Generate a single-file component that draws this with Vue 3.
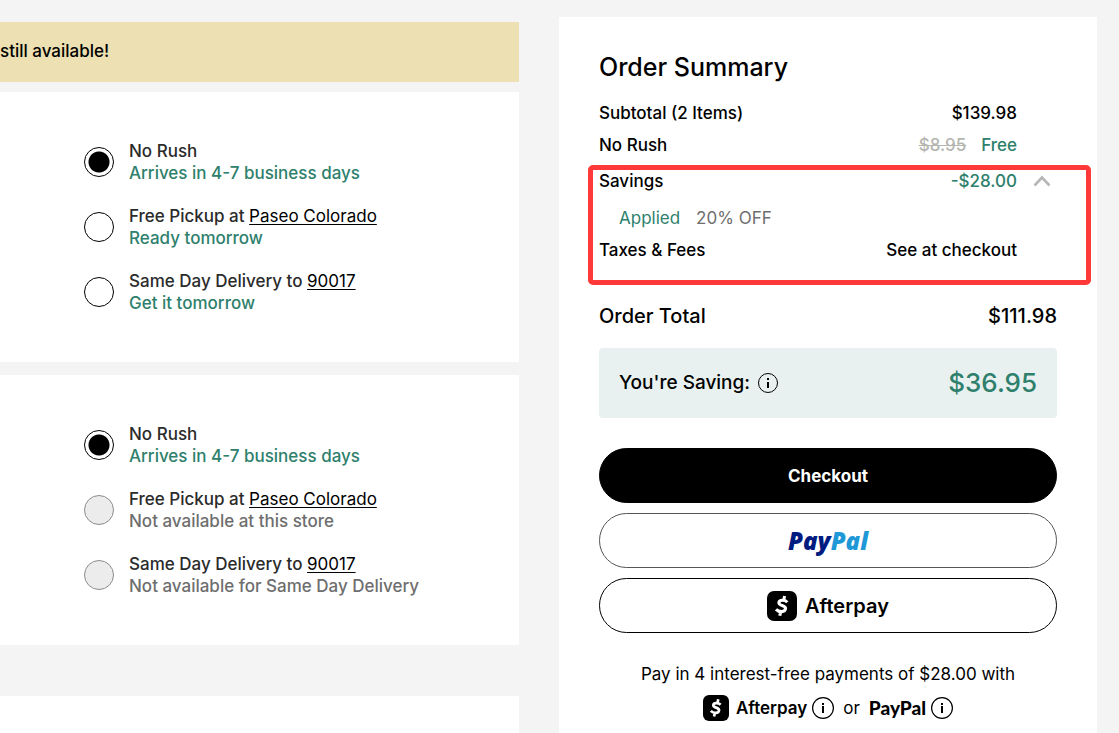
<script setup>
import { ref, reactive } from 'vue'

const items = reactive([
  {
    selected: 'rush',
    options: [
      { id: 'rush', label: 'No Rush', note: 'Arrives in 4-7 business days' },
      { id: 'pickup', label: 'Free Pickup at', link: 'Paseo Colorado', note: 'Ready tomorrow' },
      { id: 'same', label: 'Same Day Delivery to', link: '90017', note: 'Get it tomorrow' },
    ],
  },
  {
    selected: 'rush',
    options: [
      { id: 'rush', label: 'No Rush', note: 'Arrives in 4-7 business days' },
      { id: 'pickup', label: 'Free Pickup at', link: 'Paseo Colorado', note: 'Not available at this store', off: true },
      { id: 'same', label: 'Same Day Delivery to', link: '90017', note: 'Not available for Same Day Delivery', off: true },
    ],
  },
])
const open = ref(true)
</script>

<template>
  <div class="page">
    <main class="bag">
      <p class="banner">still available!</p>
      <section v-for="(item, i) in items" :key="i" class="card" role="radiogroup" aria-label="Delivery method">
        <div v-for="o in item.options" :key="o.id" class="option">
          <input :id="`${o.id}-${i}`" v-model="item.selected" type="radio" :name="`delivery-${i}`" :value="o.id" :disabled="o.off" />
          <div class="option-text">
            <div><label :for="`${o.id}-${i}`">{{ o.label }}</label><template v-if="o.link">{{ ' ' }}<a href="#">{{ o.link }}</a></template></div>
            <div class="note" :class="{ off: o.off }">{{ o.note }}</div>
          </div>
        </div>
      </section>
      <section class="card rest"></section>
    </main>

    <aside class="summary">
      <h1>Order Summary</h1>
      <div class="row"><span>Subtotal (2 Items)</span><span>$139.98</span></div>
      <div class="row"><span>No Rush</span><span><s>$8.95</s><span class="green">Free</span></span></div>
      <div class="highlight">
        <div class="row">
          <span>Savings</span><span class="green">-$28.00</span>
          <button class="toggle" type="button" aria-label="Toggle savings details" :aria-expanded="open" @click="open = !open">
            <svg width="18" height="12" viewBox="0 0 18 12"><path d="M1.5 10.500 9 2.500l7.500 8" fill="none" stroke="#b7b7b7" stroke-width="2.600" /></svg>
          </button>
        </div>
        <div v-if="open" class="applied"><span class="green">Applied</span><span>20% OFF</span></div>
        <div class="row"><span>Taxes &amp; Fees</span><span>See at checkout</span></div>
      </div>
      <div class="total"><span>Order Total</span><span>$111.98</span></div>
      <div class="saving">
        <span>You're Saving:</span>
        <button class="info" type="button" aria-label="About your savings">
          <svg width="20" height="20" viewBox="0 0 20 20"><circle cx="10" cy="10" r="9.500" fill="none" stroke="#000" /><path d="M9 5h2v2H9zM9 9h2v6H9z" /></svg>
        </button>
        <strong class="green">$36.95</strong>
      </div>
      <div class="actions">
        <button type="button" class="pill checkout">Checkout</button>
        <button type="button" class="pill paypal"><span class="pp"><span class="navy">Pay</span><span class="sky">Pal</span></span></button>
        <button type="button" class="pill">
          <svg width="30" height="30" viewBox="0 0 30 30"><rect width="30" height="30" rx="7" /><path d="M20.300 11.200C18 8.800 12.300 8.400 11.900 11.700C11.500 15.100 18.900 14 18.500 17.700C18.100 21.500 12 21.400 9 18.300M17.600 5l-1 4.500M13.800 20l-1 4.800" fill="none" stroke="#fff" stroke-width="3.100" /></svg>
          <span class="ap">Afterpay</span>
        </button>
      </div>
      <p class="pay-in">Pay in 4 interest-free payments of $28.00 with</p>
      <div class="providers">
        <svg width="26" height="26" viewBox="0 0 30 30"><rect width="30" height="30" rx="7" /><path d="M20.300 11.200C18 8.800 12.300 8.400 11.900 11.700C11.500 15.100 18.900 14 18.500 17.700C18.100 21.500 12 21.400 9 18.300M17.600 5l-1 4.500M13.800 20l-1 4.800" fill="none" stroke="#fff" stroke-width="3.100" /></svg>
        <span class="ap-small">Afterpay</span>
        <button class="info" type="button" aria-label="About Afterpay">
          <svg width="22" height="22" viewBox="0 0 22 22"><circle cx="11" cy="11" r="10.400" fill="none" stroke="#000" stroke-width="1.200" /><path d="M10 6h2v2h-2zM10 9h2v7h-2z" /></svg>
        </button>
        <span class="or">or</span>
        <span class="pp-small">PayPal</span>
        <button class="info" type="button" aria-label="About PayPal">
          <svg width="22" height="22" viewBox="0 0 22 22"><circle cx="11" cy="11" r="10.400" fill="none" stroke="#000" stroke-width="1.200" /><path d="M10 6h2v2h-2zM10 9h2v7h-2z" /></svg>
        </button>
      </div>
    </aside>
  </div>
</template>

<style>
body { margin: 0; background: #f4f4f4; }
</style>

<style scoped>
* { box-sizing: border-box; }
.page {
  display: grid;
  grid-template-columns: 519fr 538fr;
  gap: 40px;
  min-height: 100vh;
  padding-right: 22px;
  background: #f4f4f4;
  color: #000;
  font: 500 17px/22px Inter, "Liberation Sans", sans-serif;
}
button { font: inherit; color: inherit; cursor: pointer; }
svg { display: block; flex: none; }
.green { color: #2e806c; }

.bag { display: flex; flex-direction: column; padding-top: 22px; }
.banner { margin: 0 0 10px; padding: 18px 0 20px; background: #ede0b2; }
.card { display: flex; flex-direction: column; gap: 20px; margin-bottom: 13px; padding: 47px 20px 48px 84px; background: #fff; }
.rest { flex: 1; margin: 38px 0 0; padding: 0; }
.option { display: flex; align-items: center; gap: 15px; height: 45px; color: #2b2b2b; }
.option input {
  appearance: none;
  flex: none;
  width: 30px;
  height: 30px;
  margin: 0;
  border: 1px solid #000;
  border-radius: 50%;
  background: #fff;
}
.option input:checked { background: radial-gradient(circle, #000 0 10px, #fff 11px); }
.option input:disabled { border-color: #8c8c8c; background: #ececec; }
.option a { color: #000; font-weight: 400; text-decoration: underline; text-underline-offset: 2px; }
.note { color: #2e806c; }
.note.off { color: #6e6e6e; }

.summary { margin-top: 17px; padding: 34px 40px 0; background: #fff; }
h1 { margin: 0 0 14px; font-size: 25px; line-height: 32px; font-weight: 500; }
.row { display: flex; justify-content: space-between; position: relative; height: 32px; align-items: center; padding-right: 40px; }
s { margin-right: 15px; color: #b5b5b0; }
.highlight { position: relative; padding: 4px 0 19px; }
.highlight::after {
  content: "";
  position: absolute;
  inset: 4px -34px 0 -11px;
  border: 5px solid #ff3838;
  border-radius: 5px;
  pointer-events: none;
}
.toggle { position: absolute; right: 6px; padding: 0; border: 0; background: none; }
.applied { display: flex; gap: 16px; align-items: center; height: 37px; padding-top: 5px; padding-left: 20px; color: #6e6e6e; font-weight: 400; }
.total { display: flex; justify-content: space-between; margin: 19px 0 20px; font-size: 20px; line-height: 24px; }
.saving { display: flex; align-items: center; gap: 8px; height: 70px; padding: 0 20px; border-radius: 4px; background: #e9f1f0; font-size: 19px; }
.saving strong { margin-left: auto; font-size: 26px; font-weight: 500; }
.info { padding: 0; border: 0; background: none; }
.actions { display: grid; gap: 10px; margin: 30px 0; }
.pill {
  display: flex;
  align-items: center;
  justify-content: center;
  gap: 8px;
  height: 55px;
  border: 1px solid #000;
  border-radius: 28px;
  background: #fff;
}
.checkout { background: #000; color: #fff; font-weight: 700; }
.paypal { border-color: #555; }
.pp { font: italic 800 24px/30px "Open Sans", sans-serif; }
.navy { color: #001c80; }
.sky { color: #1f98d8; }
.ap { font-size: 20px; font-weight: 600; }
.pay-in { margin: 0 0 10px; font-weight: 400; text-align: center; }
.providers { display: flex; align-items: center; justify-content: center; }
.ap-small { margin: 0 5px 0 7px; font-size: 17px; font-weight: 600; }
.or { margin: 0 9px; font-weight: 400; }
.pp-small { margin-right: 5px; font: 900 19px/24px Lato, sans-serif; }
</style>
